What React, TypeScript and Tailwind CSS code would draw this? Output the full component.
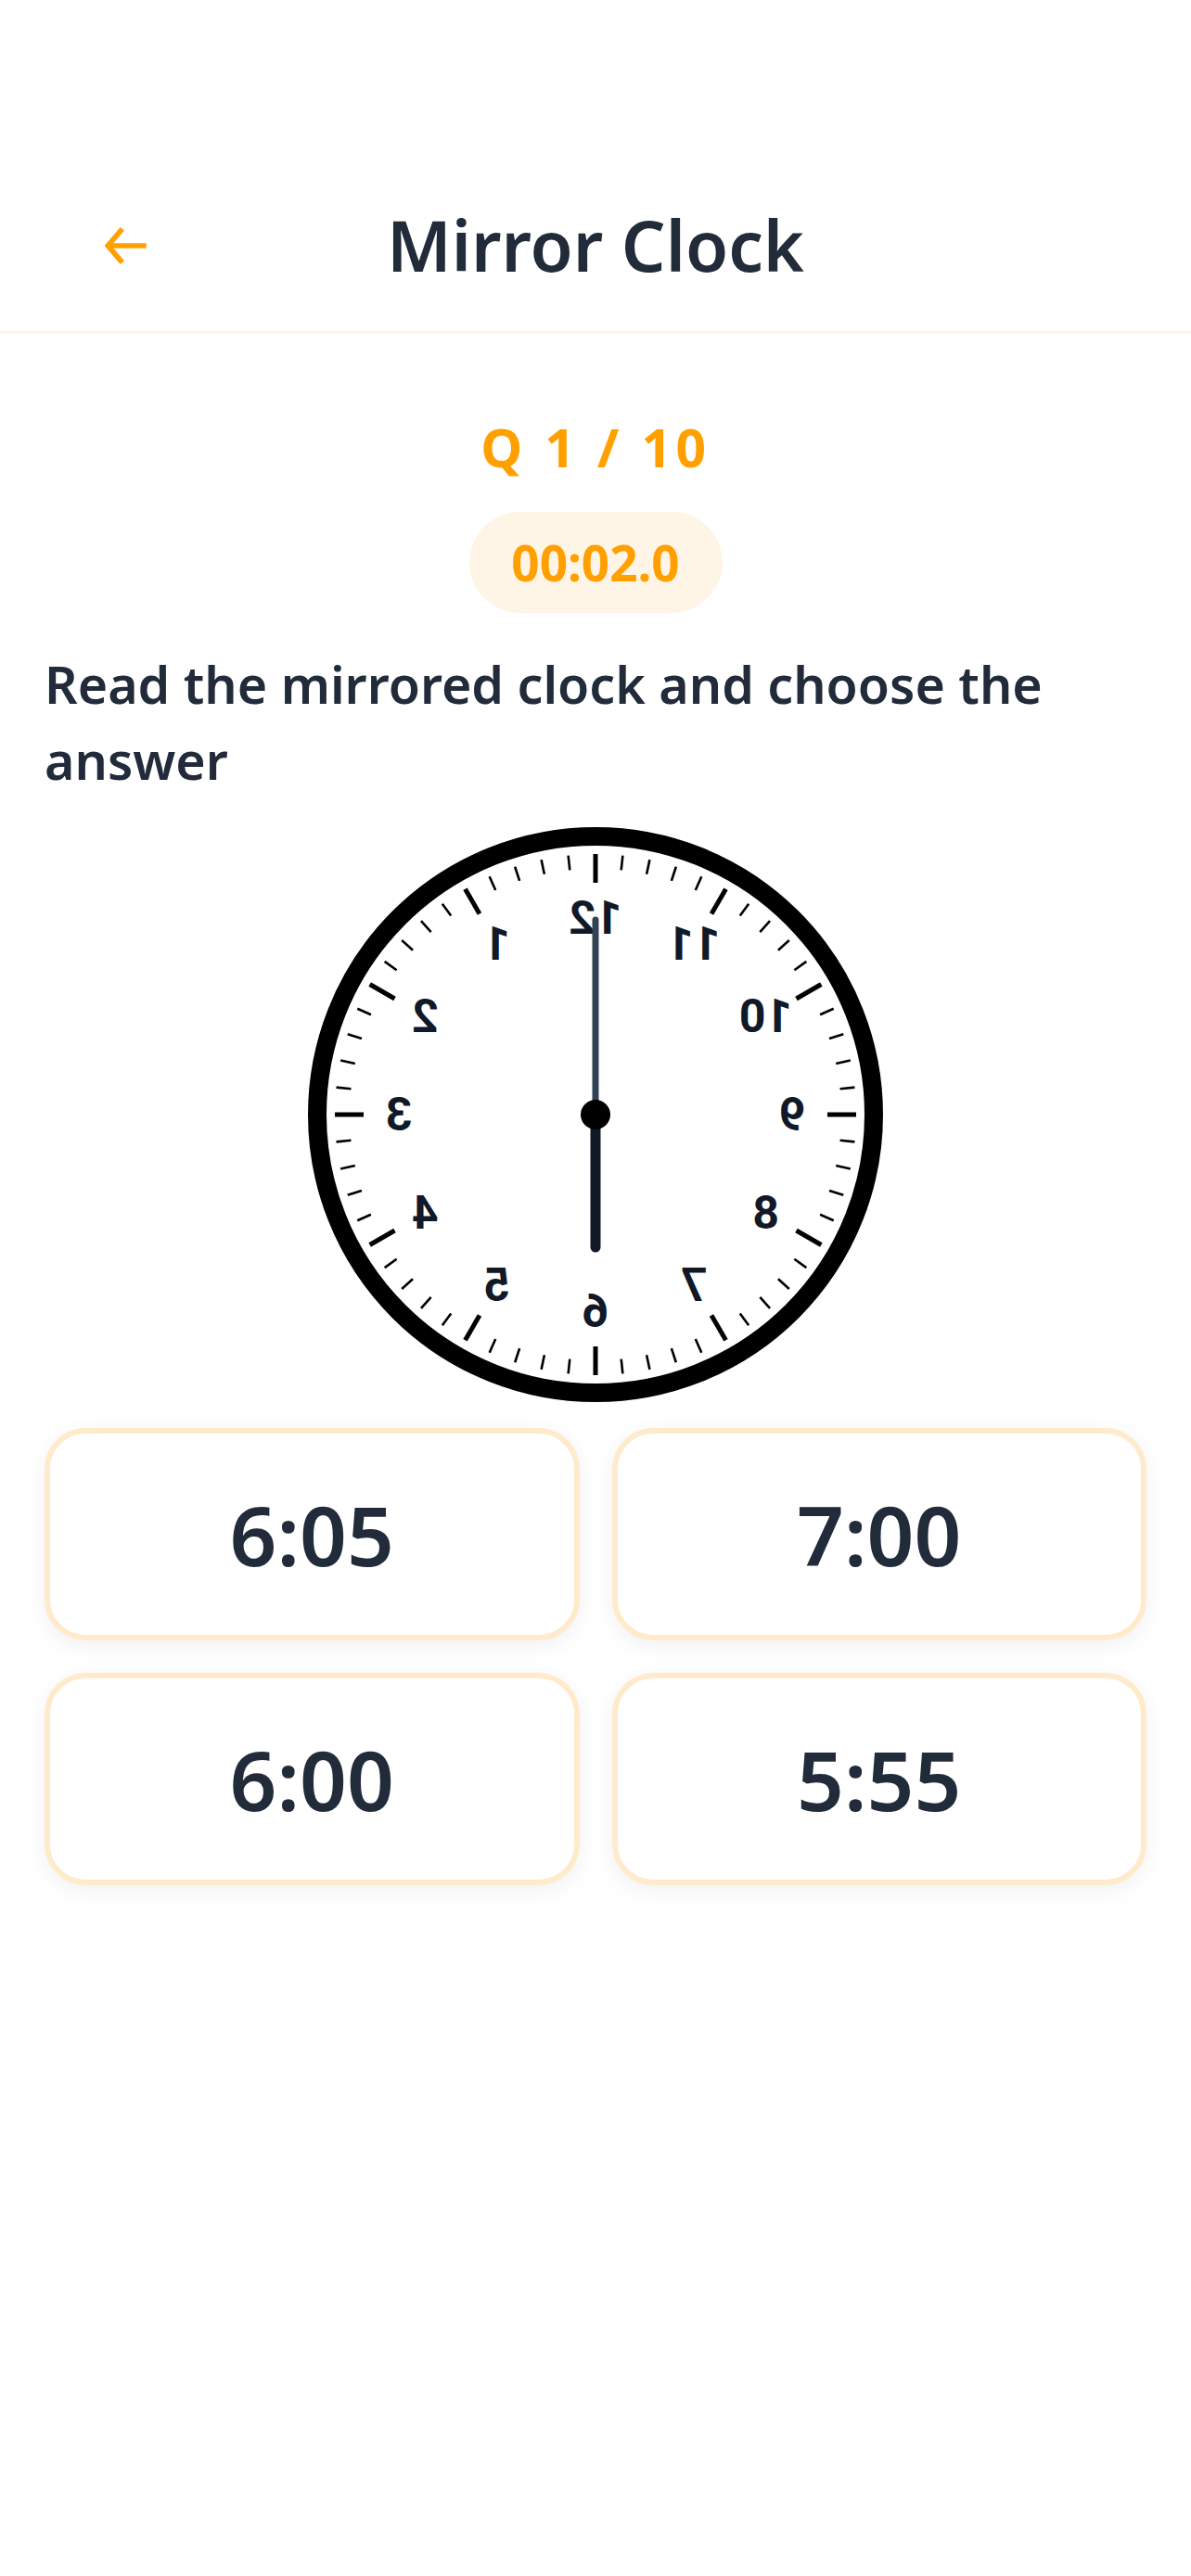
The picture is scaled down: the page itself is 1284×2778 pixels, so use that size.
import React from "react";

function Clock() {
  const cx = 320;
  const cy = 320;
  const ticks = [];
  for (let i = 0; i < 60; i++) {
    const hour = i % 5 === 0;
    const a = (i * 6 * Math.PI) / 180;
    const r1 = hour ? 250 : 265;
    const r2 = 281;
    ticks.push(
      <line
        key={i}
        x1={cx + r1 * Math.sin(a)}
        y1={cy - r1 * Math.cos(a)}
        x2={cx + r2 * Math.sin(a)}
        y2={cy - r2 * Math.cos(a)}
        stroke="#000"
        strokeWidth={hour ? 5 : 2.6}
      />
    );
  }
  const nums = [];
  for (let n = 1; n <= 12; n++) {
    const a = (n * 30 * Math.PI) / 180;
    const r = 212;
    nums.push(
      <text
        key={n}
        x={cx + r * Math.sin(a)}
        y={cy - r * Math.cos(a)}
        textAnchor="middle"
        dominantBaseline="central"
        fontFamily="Roboto, 'Liberation Sans', sans-serif"
        fontWeight={700}
        fontSize={50}
        fill="#111827"
      >
        {n}
      </text>
    );
  }
  return (
    <svg width="640" height="640" viewBox="0 0 640 640" className="block">
      <circle cx={cx} cy={cy} r={300} fill="#fff" stroke="#000" strokeWidth={20} />
      <g transform="translate(640,0) scale(-1,1)">
        {ticks}
        {nums}
      </g>
      <line x1={cx} y1={cy} x2={cx} y2={cy - 210} stroke="#334155" strokeWidth={7} strokeLinecap="round" />
      <line x1={cx} y1={cy} x2={cx} y2={cy + 143} stroke="#111827" strokeWidth={11} strokeLinecap="round" />
      <circle cx={cx} cy={cy} r={16} fill="#000" />
    </svg>
  );
}

export default function App() {
  const options = ["6:05", "7:00", "6:00", "5:55"];
  return (
    <div
      className="w-[1284px] min-h-[2778px] bg-white"
      style={{ fontFamily: "'Noto Sans', 'Open Sans', sans-serif" }}
    >
      <div className="h-[172px]" />
      <div className="h-[188px] grid grid-cols-[1fr_auto_1fr] items-center border-b-[3px] border-[#FFF4E6]">
        <div className="pl-[106px] flex items-center">
          <svg width="62" height="62" viewBox="0 0 24 24" fill="none" stroke="#FFA000" strokeWidth="2.2" strokeLinecap="butt" strokeLinejoin="miter">
            <path d="M20 12H4" />
            <path d="M10 5 4 12l6 7" />
          </svg>
        </div>
        <div className="text-[75px] font-semibold text-[#222B3A] leading-none">Mirror Clock</div>
        <div />
      </div>
      <div className="px-[48px]">
        <div className="pt-[94px] flex flex-col items-center">
          <div className="text-[57px] font-bold text-[#FFA000] tracking-[0.08em] leading-none">Q 1 / 10</div>
          <div className="mt-[41px] w-[273px] h-[109px] rounded-full bg-[#FFF5E6] flex items-center justify-center">
            <span className="text-[53px] font-bold text-[#FFA000] leading-none">00:02.0</span>
          </div>
        </div>
        <div className="mt-[36px] text-[55.5px] font-semibold text-[#222B3A] leading-[82px]">
          Read the mirrored clock and choose the answer
        </div>
        <div className="mt-[21px] flex justify-center">
          <Clock />
        </div>
        <div className="mt-[18px] grid grid-cols-2 gap-[35px]">
          {options.map((o) => (
            <div
              key={o}
              className="h-[229px] rounded-[44px] border-[6px] border-[#FFEBCC] bg-white shadow-[0_6px_24px_rgba(0,0,0,0.06)] flex items-center justify-center"
            >
              <span className="text-[89px] font-semibold text-[#222B3A] leading-none">{o}</span>
            </div>
          ))}
        </div>
      </div>
    </div>
  );
}
